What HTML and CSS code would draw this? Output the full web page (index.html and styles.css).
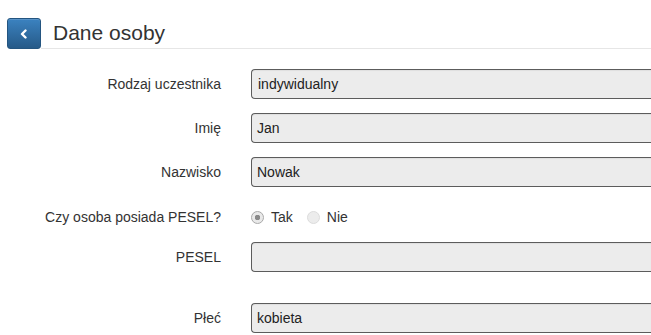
FILE: index.html
```html
<!DOCTYPE html>
<html lang="pl">
<head>
<meta charset="utf-8">
<title>Dane osoby</title>
<link rel="stylesheet" href="styles.css">
</head>
<body>
<div class="page">
  <header class="header">
    <button class="back-btn" type="button" aria-label="Wstecz">
      <svg width="10" height="10" viewBox="0 0 10 10"><polyline points="6.5,1.5 3,5 6.5,8.5" fill="none" stroke="#fff" stroke-width="2.4" stroke-linecap="round" stroke-linejoin="round"/></svg>
    </button>
    <h1 class="title">Dane osoby</h1>
  </header>
  <form class="form">
    <div class="row">
      <label class="label">Rodzaj uczestnika</label>
      <div class="field select">indywidualny</div>
    </div>
    <div class="row">
      <label class="label">Imię</label>
      <div class="field">Jan</div>
    </div>
    <div class="row">
      <label class="label">Nazwisko</label>
      <div class="field">Nowak</div>
    </div>
    <div class="row row-radio">
      <label class="label">Czy osoba posiada PESEL?</label>
      <div class="radios">
        <label class="radio-opt"><input type="radio" name="pesel" class="radio" checked disabled> Tak</label>
        <label class="radio-opt"><input type="radio" name="pesel" class="radio off" disabled> Nie</label>
      </div>
    </div>
    <div class="row row-pesel">
      <label class="label">PESEL</label>
      <div class="field"></div>
    </div>
    <div class="row">
      <label class="label">Płeć</label>
      <div class="field">kobieta</div>
    </div>
  </form>
</div>
</body>
</html>
```
FILE: styles.css
```css
html, body {
  margin: 0;
  padding: 0;
  background: #fff;
}
body {
  font-family: "Liberation Sans", Arial, sans-serif;
  font-size: 14px;
  color: #333;
}
.page {
  width: 100%;
}
.header {
  display: flex;
  align-items: flex-end;
  padding: 18px 0 0 7px;
}
.back-btn {
  width: 34px;
  height: 31px;
  margin: 0;
  padding: 0;
  border: 1px solid #245580;
  border-radius: 3px;
  background: linear-gradient(to bottom, #3b82c0 0%, #265a88 100%);
  display: flex;
  align-items: center;
  justify-content: center;
  box-shadow: inset 0 1px 0 rgba(255,255,255,.15);
}
.back-btn svg {
  display: block;
}
.title {
  flex: 1;
  margin: 0;
  padding-left: 12px;
  height: 30px;
  line-height: 30px;
  font-size: 21px;
  font-weight: normal;
  color: #333;
  border-bottom: 1px solid #e6e6e6;
}
.form {
  display: flex;
  flex-direction: column;
  padding-top: 20px;
}
.row {
  display: grid;
  grid-template-columns: 221px 1fr;
  column-gap: 30px;
  align-items: center;
  margin-bottom: 14px;
}
.label {
  text-align: right;
  color: #333;
}
.field {
  box-sizing: border-box;
  height: 30px;
  line-height: 28px;
  padding: 0 5px;
  border: 1px solid #5c5c5c;
  border-right: none;
  border-radius: 4px 0 0 4px;
  background: #ececec;
  color: #222;
  box-shadow: inset 0 1px 1px rgba(0,0,0,.06);
}
.field.select {
  padding-left: 6px;
}
.row-radio {
  height: 27px;
  align-items: start;
  padding-top: 6px;
  box-sizing: border-box;
}
.row-radio .label {
  line-height: 20px;
}
.radios {
  display: flex;
  gap: 14px;
  line-height: 20px;
}
.radio-opt {
  display: flex;
  align-items: center;
  gap: 7px;
  color: #333;
}
.radio {
  appearance: none;
  -webkit-appearance: none;
  margin: 0;
  width: 13px;
  height: 13px;
  border-radius: 50%;
  border: 1px solid #a9a9a9;
  background: radial-gradient(circle, #8a8a8a 0 2.5px, #e9e9e9 3px);
  box-sizing: border-box;
}
.radio.off {
  border-color: #dcdcdc;
  background: #ececec;
}
.row-pesel {
  margin-bottom: 31px;
}
```
